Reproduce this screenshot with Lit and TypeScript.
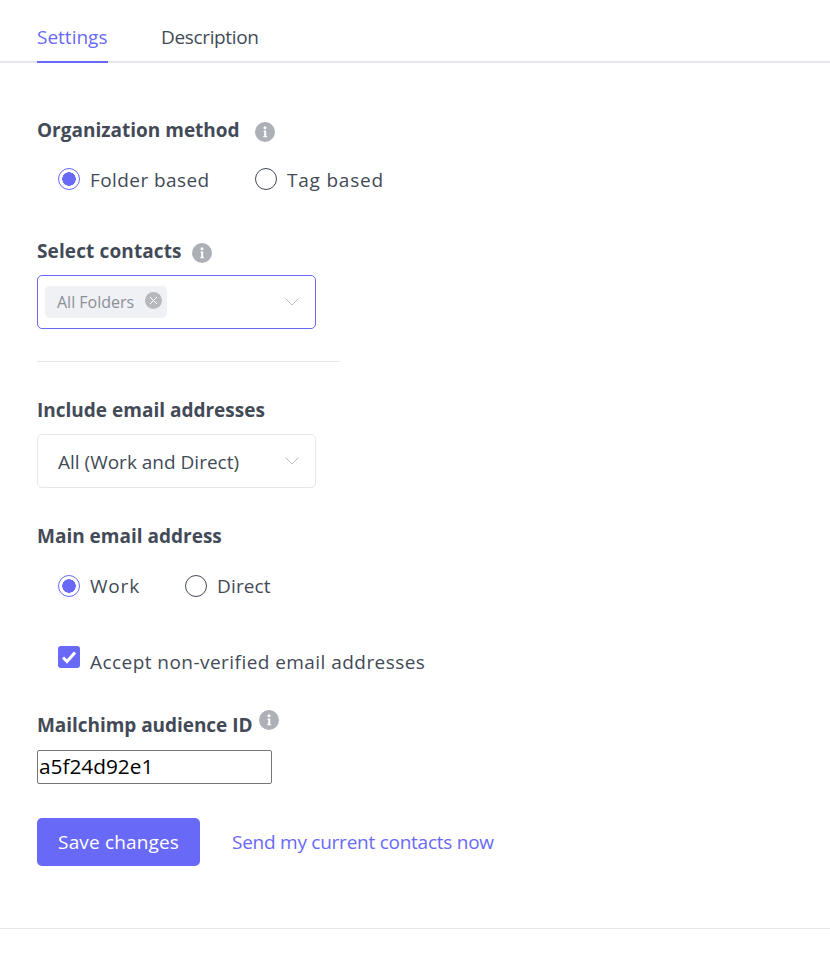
import { LitElement, html, css } from 'lit';
import { customElement } from 'lit/decorators.js';

const infoIcon = html`<svg class="info" width="20" height="20" viewBox="0 0 20 20">
  <circle cx="10" cy="10" r="10" fill="#adb0b7"></circle>
  <circle cx="10" cy="5.8" r="1.5" fill="#fff"></circle>
  <path d="M8.6 8.6h2.6v5.4h0.9v1.3H8.3V14h0.9V9.9H8.6z" fill="#fff"></path>
</svg>`;

const chevron = html`<svg class="chevron" width="14" height="8" viewBox="0 0 14 8" fill="none">
  <path d="M0.5 0.5l6.5 6.5 6.5-6.5" stroke="#babcc2" stroke-width="1"></path>
</svg>`;

@customElement('app-root')
export class AppRoot extends LitElement {
  static styles = css`
    * {
      box-sizing: border-box;
    }

    :host {
      display: block;
      width: 830px;
      height: 966px;
      background: #fff;
      color: #434a57;
      font-family: 'Open Sans', Lato, sans-serif;
      font-size: 19px;
      overflow: hidden;
    }

    .tabs {
      display: flex;
      gap: 53px;
      height: 63px;
      padding: 22px 0 0 37px;
      border-bottom: 2px solid #e6e6ec;
    }

    .tab {
      height: 41px;
      line-height: 31px;
      width: 71px;
      white-space: nowrap;
    }

    .tab.active {
      color: #6969f7;
      border-bottom: 2px solid #6969f7;
    }

    .tab.plain {
      letter-spacing: -0.35px;
    }

    .form {
      padding-left: 37px;
    }

    .label {
      display: flex;
      align-items: center;
      height: 26px;
      font-weight: 700;
      white-space: nowrap;
    }

    .method-label {
      margin-top: 54px;
    }

    .method-label .info {
      margin: 3px 0 0 15px;
    }

    .contacts-label {
      margin-top: 46px;
      letter-spacing: 0.12px;
    }

    .contacts-label .info {
      margin: 3px 0 0 10px;
    }

    .include-label,
    .main-label {
      margin-top: 35px;
    }

    .audience-label {
      margin-top: 37px;
      padding-top: 2px;
      letter-spacing: -0.05px;
    }

    .audience-label .info {
      margin: -10px 0 0 7px;
    }

    .radios {
      display: flex;
      margin-left: 21px;
      margin-top: 24px;
      height: 26px;
    }

    .radios.method {
      margin-top: 23px;
    }

    .radio {
      display: flex;
      align-items: center;
      white-space: nowrap;
    }

    .method .radio-text {
      padding-top: 2px;
    }

    .method .radio:first-child {
      width: 197px;
      letter-spacing: 0.42px;
    }

    .method .radio:last-child {
      letter-spacing: 0.78px;
    }

    .address .radio:first-child {
      width: 127px;
      letter-spacing: 0.8px;
    }

    .address .radio:last-child {
      letter-spacing: 0.15px;
    }

    .dot {
      width: 22px;
      height: 22px;
      border-radius: 50%;
      border: 1.3px solid #434a57;
      margin-right: 10px;
      flex: none;
    }

    .dot.on {
      border-color: #6969f7;
      background: radial-gradient(circle, #6969f7 0 6.5px, #fff 7px);
    }

    .select {
      display: flex;
      align-items: center;
      justify-content: space-between;
      width: 279px;
      height: 54px;
      margin-top: 11px;
      border: 1px solid #e6e6ec;
      border-radius: 5px;
      padding: 0 16px 0 20px;
    }

    .select-text {
      padding-top: 2px;
    }

    .select.focused {
      border-color: #6969f7;
      padding-left: 7px;
    }

    .chip {
      display: flex;
      align-items: center;
      justify-content: space-between;
      width: 122px;
      height: 32px;
      background: #f0f1f5;
      border-radius: 5px;
      padding: 0 5px 0 12px;
      color: #8b8f98;
      font-size: 16px;
    }

    .chip svg {
      margin-top: -3px;
    }

    .divider {
      width: 303px;
      height: 1px;
      margin-top: 32px;
      background: #e8e8ec;
    }

    .check-row {
      display: flex;
      margin: 47px 0 0 21px;
      height: 28px;
    }

    .box {
      display: flex;
      align-items: center;
      justify-content: center;
      width: 22px;
      height: 22px;
      background: #6969f7;
      border-radius: 3px;
      margin-right: 10px;
    }

    .check-row span {
      line-height: 28px;
      margin-top: 2px;
      letter-spacing: 0.45px;
      white-space: nowrap;
    }

    input {
      display: block;
      width: 235px;
      height: 34px;
      margin-top: 13px;
      padding: 0 1px 2px;
      border: 1px solid #767676;
      border-radius: 2px;
      font: inherit;
      font-size: 20.8px;
      color: #000;
      background: #fff;
    }

    .actions {
      display: flex;
      align-items: center;
      gap: 32px;
      margin-top: 34px;
    }

    .save {
      width: 163px;
      height: 48px;
      border: 0;
      border-radius: 5px;
      background: #6969f7;
      color: #fff;
      font: inherit;
      font-weight: 500;
      letter-spacing: 0.15px;
    }

    .link {
      color: #6969f7;
      text-decoration: none;
      white-space: nowrap;
      letter-spacing: -0.25px;
    }

    .footer {
      height: 1px;
      margin-top: 62px;
      background: #e8e8ec;
    }
  `;

  renderRadio(label: string, on: boolean) {
    return html`<label class="radio">
      <span class="dot ${on ? 'on' : ''}"></span><span class="radio-text">${label}</span>
    </label>`;
  }

  render() {
    return html`
      <div class="tabs">
        <div class="tab active">Settings</div>
        <div class="tab plain">Description</div>
      </div>
      <div class="form">
        <div class="label method-label">Organization method ${infoIcon}</div>
        <div class="radios method">
          ${this.renderRadio('Folder based', true)}
          ${this.renderRadio('Tag based', false)}
        </div>
        <div class="label contacts-label">Select contacts ${infoIcon}</div>
        <div class="select focused">
          <div class="chip">
            All Folders
            <svg width="17" height="17" viewBox="0 0 17 17">
              <circle cx="8.5" cy="8.5" r="8.5" fill="#b6b8bd"></circle>
              <path d="M5 5l7 7M12 5l-7 7" stroke="#fff" stroke-width="1"></path>
            </svg>
          </div>
          ${chevron}
        </div>
        <div class="divider"></div>
        <div class="label include-label">Include email addresses</div>
        <div class="select"><span class="select-text">All (Work and Direct)</span> ${chevron}</div>
        <div class="label main-label">Main email address</div>
        <div class="radios address">
          ${this.renderRadio('Work', true)}
          ${this.renderRadio('Direct', false)}
        </div>
        <div class="check-row">
          <div class="box">
            <svg width="16" height="14" viewBox="0 0 16 14" fill="none">
              <path d="M2 7.5l4 4L14 2.5" stroke="#fff" stroke-width="3"></path>
            </svg>
          </div>
          <span>Accept non-verified email addresses</span>
        </div>
        <div class="label audience-label">Mailchimp audience ID ${infoIcon}</div>
        <input value="a5f24d92e1" />
        <div class="actions">
          <button class="save">Save changes</button>
          <a class="link" href="#">Send my current contacts now</a>
        </div>
      </div>
      <div class="footer"></div>
    `;
  }
}
